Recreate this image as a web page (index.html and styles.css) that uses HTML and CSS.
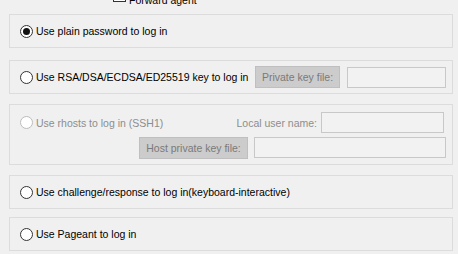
FILE: index.html
```html
<!DOCTYPE html>
<html>
<head>
<meta charset="utf-8">
<link rel="stylesheet" href="styles.css">
</head>
<body>
<div class="page">
  <div class="fwd"><span class="cb"></span><span class="fwd-text">Forward agent</span></div>

  <div class="group g-single">
    <label class="radio"><span class="rb checked"></span><span>Use plain password to log in</span></label>
  </div>

  <div class="group g-single g2">
    <label class="radio"><span class="rb"></span><span>Use RSA/DSA/ECDSA/ED25519 key to log in</span></label>
    <span class="btn pk">Private key file:</span>
    <span class="input pk-in"></span>
  </div>

  <div class="group g3">
    <div class="row r1">
      <label class="radio disabled"><span class="rb"></span><span>Use rhosts to log in (SSH1)</span></label>
      <span class="lbl">Local user name:</span>
      <span class="input lu-in"></span>
    </div>
    <div class="row r2">
      <span class="btn hk">Host private key file:</span>
      <span class="input hk-in"></span>
    </div>
  </div>

  <div class="group g-single g4">
    <label class="radio"><span class="rb"></span><span>Use challenge/response to log in(keyboard-interactive)</span></label>
  </div>

  <div class="group g-single g5">
    <label class="radio"><span class="rb"></span><span>Use Pageant to log in</span></label>
  </div>
</div>
</body>
</html>
```

FILE: styles.css
```css
html, body {
  margin: 0;
  padding: 0;
  background: #f0f0f0;
  overflow: hidden;
}
body {
  width: 458px;
  height: 254px;
  font-family: "Liberation Sans", Arial, sans-serif;
  font-size: 10.5px;
  color: #000;
}
.page {
  display: flex;
  flex-direction: column;
  padding-left: 9px;
}
.fwd {
  display: flex;
  align-items: flex-end;
  height: 13px;
  margin-top: -11px;
  margin-bottom: 12px;
  margin-left: 104px;
  gap: 3px;
}
.fwd-text {
  line-height: 12px;
  margin-bottom: -4px;
}
.cb {
  width: 13px;
  height: 13px;
  box-sizing: border-box;
  border: 1px solid #333;
  background: #fff;
  flex: none;
}
.group {
  box-sizing: border-box;
  width: 444px;
  border: 1px solid #dcdcdc;
}
.g-single {
  height: 34px;
  display: flex;
  align-items: center;
  padding-left: 10px;
  padding-right: 6px;
}
.g2 { margin-top: 12px; }
.g3 {
  margin-top: 10px;
  height: 61px;
  padding: 7px 6px 5px 10px;
  display: flex;
  flex-direction: column;
  gap: 4px;
}
.g4 { margin-top: 10px; }
.g5 { margin-top: 8px; }
.radio {
  display: flex;
  align-items: center;
  gap: 3px;
  white-space: nowrap;
}
.rb {
  width: 13px;
  height: 13px;
  box-sizing: border-box;
  border: 1px solid #333;
  border-radius: 50%;
  background: #fff;
  display: flex;
  align-items: center;
  justify-content: center;
  flex: none;
}
.rb.checked::after {
  content: "";
  width: 7px;
  height: 7px;
  border-radius: 50%;
  background: #111;
}
.radio.disabled { color: #8d8d8d; }
.radio.disabled .rb { border-color: #bcbcbc; }
.btn {
  box-sizing: border-box;
  height: 22px;
  background: #cccccc;
  border: 1px solid #bfbfbf;
  color: #7a7a7a;
  display: flex;
  align-items: center;
  justify-content: center;
  white-space: nowrap;
}
.input {
  box-sizing: border-box;
  height: 21px;
  border: 1px solid #c8c8c8;
  background: #f2f2f2;
}
.pk { width: 85px; margin-left: auto; }
.pk-in { width: 99px; margin-left: 7px; }
.row {
  display: flex;
  align-items: center;
}
.r1 { height: 21px; padding-right: 2px; }
.lbl {
  margin-left: auto;
  color: #8d8d8d;
  margin-right: 4px;
}
.lu-in { width: 123px; }
.r2 { justify-content: flex-end; height: 22px; align-items: flex-start; }
.hk { width: 109px; }
.hk-in { width: 192px; margin-left: 6px; }
```
